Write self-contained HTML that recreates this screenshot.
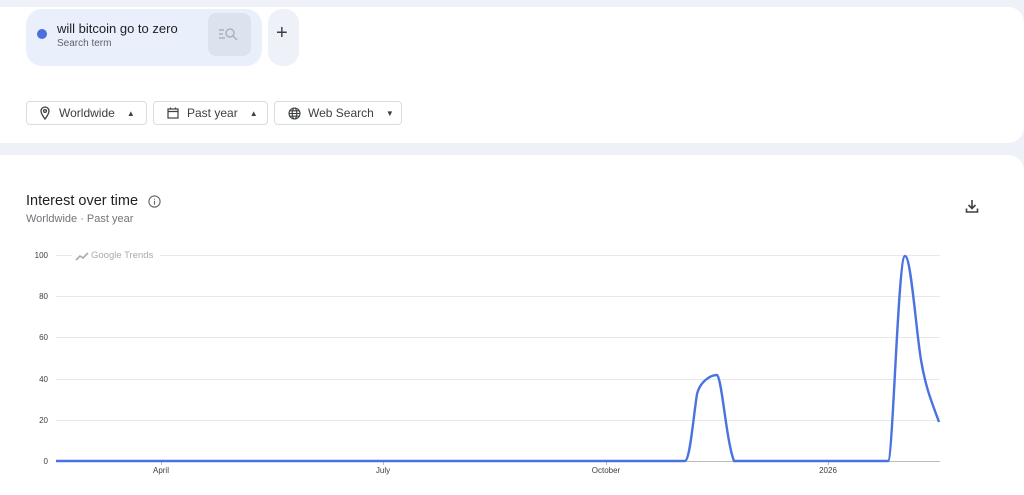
<!DOCTYPE html>
<html><head><style>
body{margin:0;width:1024px;height:491px;background:#eef2f8;font-family:"Liberation Sans",Arial,sans-serif;position:relative;overflow:hidden}
.card{position:absolute;left:0;right:0;background:#fff;border-radius:0 16px 16px 0}
.chip{position:absolute;top:9px;height:57px;background:#e9f0fc;border-radius:16px}
.btn{position:absolute;top:101px;height:24px;border:1px solid #dadce0;border-radius:4px;font-size:12px;color:#3c4043;display:flex;align-items:center;box-sizing:border-box}
.lab{position:absolute;font-size:8px;color:#3c4043}
</style></head><body>
<div class="card" style="top:7px;height:136px"></div>
<div class="card" style="top:155px;height:340px;border-radius:0 16px 0 0"></div>
<div class="chip" style="left:26px;width:236px"></div>
<div style="position:absolute;left:37px;top:29px;width:10px;height:10px;border-radius:50%;background:#4a6fe0"></div>
<div style="position:absolute;left:57px;top:21px;font-size:13px;color:#202124">will bitcoin go to zero</div>
<div style="position:absolute;left:57px;top:38px;font-size:10px;color:#5f6368">Search term</div>
<div style="position:absolute;left:208px;top:13px;width:43px;height:43px;border-radius:8px;background:#dde3ee"></div>
<svg style="position:absolute;left:218px;top:27px" width="22" height="16" viewBox="0 0 22 16" fill="none" stroke="#aab2c0" stroke-width="1.5"><path d="M1 3h5M1 7h4M1 11h6"/><circle cx="12" cy="6" r="4"/><path d="M15 9l4 4"/></svg>
<div class="chip" style="left:268px;width:31px;border-radius:14px;background:#eef2f8"></div>
<div style="position:absolute;left:276px;top:22px;font-size:20px;color:#3c4043">+</div>
<div class="btn" style="left:26px;width:121px;padding-left:12px"><svg width="12" height="14" viewBox="0 0 12 14" fill="none" stroke="#3c4043" stroke-width="1.3"><path d="M6 13C3 9 2 7 2 5a4 4 0 018 0c0 2-1 4-4 8z"/><circle cx="6" cy="5" r="1.4"/></svg><span style="margin-left:8px">Worldwide</span><span style="margin-left:12px;font-size:8px">▲</span></div>
<div class="btn" style="left:153px;width:115px;padding-left:13px"><svg width="12" height="12" viewBox="0 0 12 12" fill="none" stroke="#3c4043" stroke-width="1.2"><rect x="1" y="2" width="10" height="9"/><path d="M1 4.5h10M3.5 0.5v2M8.5 0.5v2"/></svg><span style="margin-left:8px">Past year</span><span style="margin-left:12px;font-size:8px">▲</span></div>
<div class="btn" style="left:274px;width:128px;padding-left:13px"><svg width="13" height="13" viewBox="0 0 13 13" fill="none" stroke="#3c4043" stroke-width="1.1"><circle cx="6.5" cy="6.5" r="5.5"/><ellipse cx="6.5" cy="6.5" rx="2.3" ry="5.5"/><path d="M1 6.5h11M2 3.8h9M2 9.2h9"/></svg><span style="margin-left:7px">Web Search</span><span style="margin-left:12px;font-size:8px">▼</span></div>
<div style="position:absolute;left:26px;top:193px;font-size:14.5px;color:#202124">Interest over time</div>
<svg style="position:absolute;left:148px;top:195px" width="13" height="13" viewBox="0 0 13 13" fill="none" stroke="#5f6368" stroke-width="1.1"><circle cx="6.5" cy="6.5" r="5.6"/><path d="M6.5 5.8v3.8M6.5 3.6v1"/></svg>
<div style="position:absolute;left:26px;top:213px;font-size:11px;color:#70757a">Worldwide · Past year</div>
<svg style="position:absolute;left:965px;top:199px" width="14" height="15" viewBox="0 0 14 15" fill="none" stroke="#3c4043" stroke-width="1.6"><path d="M7 1v8M3.5 6l3.5 3.5L10.5 6M1.5 9.5v3.5h11V9.5"/></svg>
<svg style="position:absolute;left:0;top:0" width="1024" height="491">
<g stroke="#e8e8e8" stroke-width="1"><path d="M56 255.5H72M160 255.5H940M56 296.5H940M56 337.5H940M56 379.5H940M56 420.5H940"/></g>
<path d="M56 461.5H940" stroke="#bbb"/>
<g stroke="#bbb"><path d="M161.5 461v4M383.5 461v4M606.5 461v4M828.5 461v4"/></g>
<path d="M76 260l4-4 3 2 5-5" stroke="#aaa" stroke-width="1.6" fill="none"/>
<text x="91" y="258" font-size="9.5" fill="#aaa" font-family="Liberation Sans">Google Trends</text>
<g font-size="8" fill="#3c4043" font-family="Liberation Sans" text-anchor="end"><text x="48" y="258">100</text><text x="48" y="299">80</text><text x="48" y="340">60</text><text x="48" y="382">40</text><text x="48" y="423">20</text><text x="48" y="464">0</text></g>
<g font-size="8" fill="#3c4043" font-family="Liberation Sans" text-anchor="middle"><text x="161" y="473">April</text><text x="383" y="473">July</text><text x="606" y="473">October</text><text x="828" y="473">2026</text></g>
<path d="M56 461H685C690 460 693 420 697 394C700 382 710 375 717 375C722 378 726 440 734 461H888C893 461 898 256 905 256C911 256 916 330 921 360C926 390 933 405 939 422" fill="none" stroke="#4a72e0" stroke-width="2.4" stroke-linejoin="round"/>
</svg>
</body></html>
